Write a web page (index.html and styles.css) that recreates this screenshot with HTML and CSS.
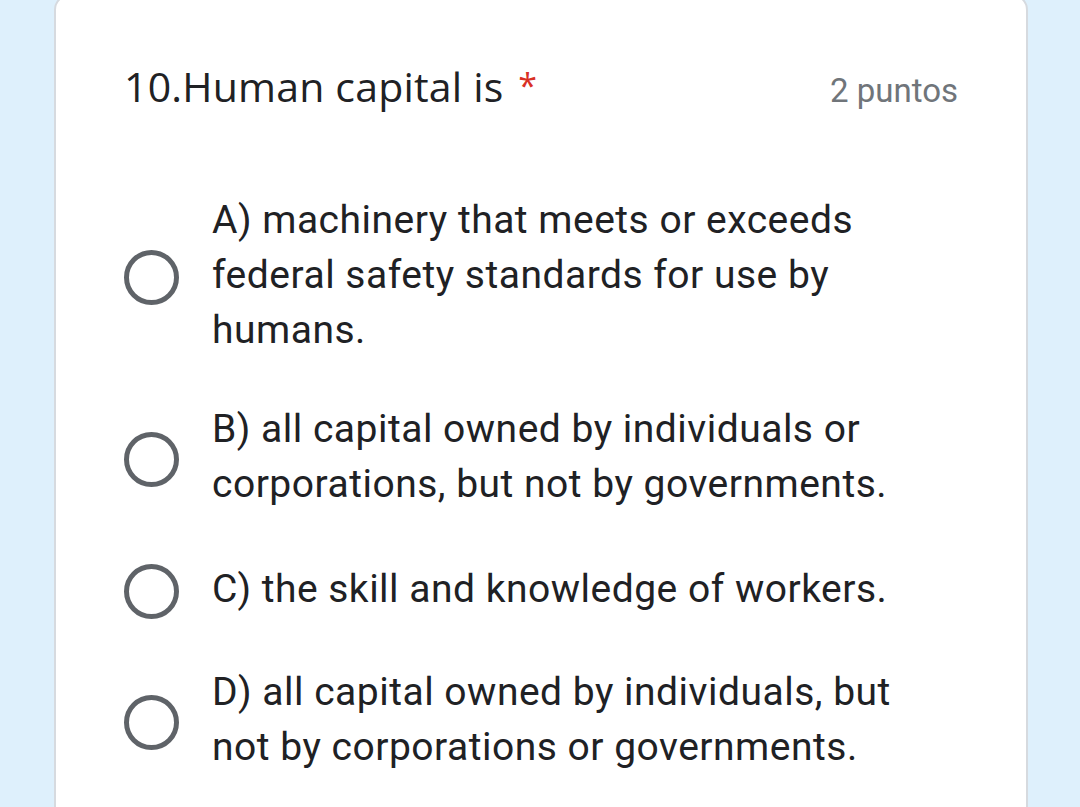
FILE: index.html
```html
<!DOCTYPE html>
<html>
<head>
<meta charset="utf-8">
<link rel="stylesheet" href="styles.css">
</head>
<body>
<div class="card">
  <div class="header">
    <div class="title">10.Human capital is <span class="req">*</span></div>
    <div class="points">2 puntos</div>
  </div>
  <div class="options">
    <div class="option opt-a">
      <span class="radio"></span>
      <div class="label">A) machinery that meets or exceeds<br>federal safety standards for use by<br>humans.</div>
    </div>
    <div class="option opt-b">
      <span class="radio"></span>
      <div class="label">B) all capital owned by individuals or<br>corporations, but not by governments.</div>
    </div>
    <div class="option opt-c">
      <span class="radio"></span>
      <div class="label">C) the skill and knowledge of workers.</div>
    </div>
    <div class="option opt-d">
      <span class="radio"></span>
      <div class="label">D) all capital owned by individuals, but<br>not by corporations or governments.</div>
    </div>
  </div>
</div>
</body>
</html>
```

FILE: styles.css
```css
html, body {
  margin: 0;
  padding: 0;
  background: #def0fc;
  height: 807px;
  overflow: hidden;
}
.card {
  box-sizing: border-box;
  margin: -6px 0 0 54px;
  width: 974px;
  height: 830px;
  background: #fff;
  border: 2px solid #d6dadf;
  border-radius: 16px;
  padding: 0 68px 0 68px;
}
.header {
  display: flex;
  justify-content: space-between;
  align-items: baseline;
  padding-top: 62px;
}
.title {
  font-family: "Open Sans", sans-serif;
  font-size: 41px;
  color: #202124;
  line-height: 56px;
  letter-spacing: 0.2px;
}
.req {
  color: #d93025;
  font-size: 34px;
  position: relative;
  top: -4px;
  margin-left: 4px;
}
.points {
  font-family: Roboto, sans-serif;
  font-size: 33px;
  color: #70757a;
}
.options {
  padding-top: 76px;
  display: flex;
  flex-direction: column;
}
.option {
  display: flex;
  align-items: center;
}
.option .radio {
  position: relative;
  top: 2px;
}
.opt-b { margin-top: 44px; }
.opt-c { margin-top: 50px; }
.opt-d { margin-top: 48px; }
.radio {
  box-sizing: border-box;
  width: 55px;
  height: 55px;
  border: 5px solid #5f6368;
  border-radius: 50%;
  flex: none;
}
.label {
  margin-left: 33px;
  font-family: Roboto, sans-serif;
  font-size: 39px;
  line-height: 55px;
  color: #202124;
  letter-spacing: 0.5px;
}
```
